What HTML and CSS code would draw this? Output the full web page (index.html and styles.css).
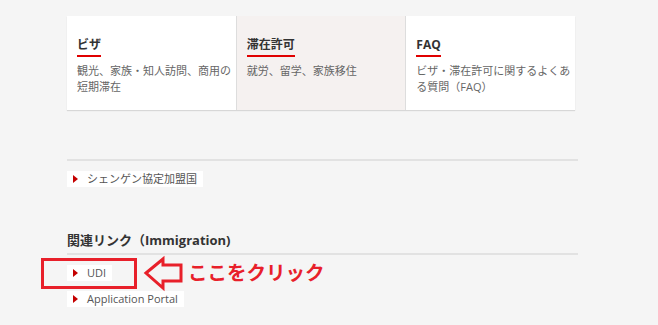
FILE: index.html
```html
<!DOCTYPE html>
<html lang="ja">
<head>
  <meta charset="UTF-8" />
  <meta name="viewport" content="width=device-width, initial-scale=1.0"/>
  <title>ビザ・滞在許可</title>
  <link rel="stylesheet" href="styles.css">
</head>
<body>

  <div class="page">
    <div class="cards">
      <a class="card" href="#">
        <span class="card-title">ビザ</span>
        <p>観光、家族・知人訪問、商用の短期滞在</p>
      </a>
      <a class="card card-active" href="#">
        <span class="card-title">滞在許可</span>
        <p>就労、留学、家族移住</p>
      </a>
      <a class="card" href="#">
        <span class="card-title">FAQ</span>
        <p>ビザ・滞在許可に関するよくある質問（FAQ）</p>
      </a>
    </div>

    <div class="rule rule-top"></div>

    <ul class="links">
      <li><a href="#">シェンゲン協定加盟国</a></li>
    </ul>

    <h2 class="section-title">関連リンク（Immigration)</h2>
    <div class="rule"></div>

    <ul class="links">
      <li><a href="#">UDI</a></li>
      <li><a href="#">Application Portal</a></li>
    </ul>

    <!-- annotation drawn over the page -->
    <div class="note-box"></div>
    <svg class="note-arrow" width="48" height="44" viewBox="0 0 48 44">
      <polygon points="6,21 23,7 23,13 41,13 41,29 23,29 23,36" fill="none" stroke="#e8202a" stroke-width="3" stroke-linejoin="miter"/>
    </svg>
    <span class="note-text">ここをクリック</span>
  </div>

</body>
</html>
```

FILE: styles.css
```css
body {
  font-family: "Open Sans", "Noto Sans CJK JP", sans-serif;
  background-color: #f5f5f5;
  margin: 0;
  color: #333;
}

.page {
  position: relative;
  width: 511px;
  margin-left: 67px;
  padding-top: 16px;
}

.cards {
  display: flex;
  width: 508px;
  box-shadow: 0 1px 1px rgba(0, 0, 0, 0.12);
}

.card {
  flex: 1;
  display: flex;
  flex-direction: column;
  align-items: flex-start;
  background-color: white;
  padding: 20px 4px 15px 10px;
  text-decoration: none;
  border-left: 1px solid #ddd;
}

.card:first-child {
  border-left: none;
}

.card-active {
  background-color: #f5f1f0;
}

.card-title {
  font-size: 12px;
  font-weight: bold;
  line-height: 18px;
  color: #333;
  padding-bottom: 1px;
  border-bottom: 2px solid #e00000;
}

.card p {
  margin: 6px 0 0 0;
  font-size: 11px;
  line-height: 16px;
  color: #666;
}

.rule {
  height: 2px;
  background-color: #e2e2e2;
}

.rule-top {
  margin-top: 49px;
}

.links {
  list-style: none;
  margin: 10px 0 0 0;
  padding: 0;
}

.links li {
  display: flex;
  margin-bottom: 10px;
  font-size: 11px;
  line-height: 16px;
}

.links a {
  display: flex;
  align-items: center;
  background-color: white;
  padding: 0 6px;
  color: #555;
  text-decoration: none;
}

.links a::before {
  content: "";
  border-left: 5px solid #c40000;
  border-top: 4px solid transparent;
  border-bottom: 4px solid transparent;
  margin-right: 9px;
}

.section-title {
  margin: 43px 0 3px 0;
  font-size: 13px;
  line-height: 20px;
  font-weight: bold;
  color: #333;
}

.note-box {
  position: absolute;
  left: -26px;
  top: 258px;
  width: 90px;
  height: 25px;
  border: 3px solid #e8202a;
}

.note-arrow {
  position: absolute;
  left: 73px;
  top: 252px;
}

.note-text {
  position: absolute;
  left: 121px;
  top: 259px;
  font-family: "Noto Sans CJK JP", sans-serif;
  font-size: 19.5px;
  line-height: 26px;
  font-weight: bold;
  color: #e8202a;
}
```
